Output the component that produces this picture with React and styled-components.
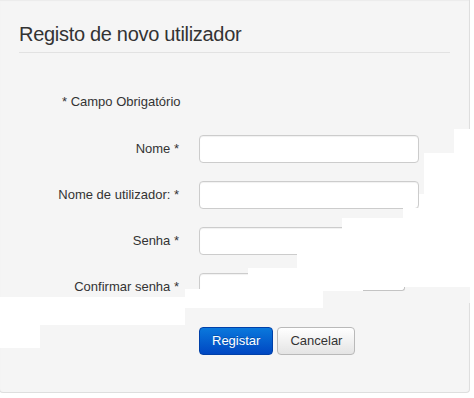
import React from 'react';
import styled, { createGlobalStyle } from 'styled-components';

const fields = [
  { id: 'name', label: 'Nome *', type: 'text' },
  { id: 'username', label: 'Nome de utilizador: *', type: 'text' },
  { id: 'password', label: 'Senha *', type: 'password' },
  { id: 'confirm', label: 'Confirmar senha *', type: 'password' },
];

// white patches that cover parts of the captured page
const patches = [
  { x: 454, y: 129, w: 16, h: 24 },
  { x: 424, y: 153, w: 46, h: 41 },
  { x: 419, y: 194, w: 51, h: 14 },
  { x: 403, y: 208, w: 67, h: 10 },
  { x: 342, y: 218, w: 128, h: 11 },
  { x: 297, y: 229, w: 173, h: 39 },
  { x: 248, y: 268, w: 222, h: 19 },
  { x: 248, y: 287, w: 115, h: 5 },
  { x: 404, y: 287, w: 66, h: 16, tone: 'panel' },
  { x: 323, y: 291, w: 81, h: 12, tone: 'panel' },
  { x: 185, y: 289, w: 138, h: 19 },
  { x: 0, y: 297, w: 185, h: 28 },
  { x: 0, y: 297, w: 40, h: 51 },
];

function App() {
  return (
    <Page>
      <GlobalStyle />
      <Well>
        <Legend>Registo de novo utilizador</Legend>

        <Form onSubmit={(e) => e.preventDefault()}>
          <Required>* Campo Obrigatório</Required>

          {fields.map((f) => (
            <Row key={f.id}>
              <Label htmlFor={f.id}>{f.label}</Label>
              <Input id={f.id} type={f.type} />
            </Row>
          ))}

          <Actions>
            <Button type="submit" $primary>Registar</Button>
            <Button type="button">Cancelar</Button>
          </Actions>
        </Form>
      </Well>

      {patches.map((p, i) => (
        <Patch key={i} $x={p.x} $y={p.y} $w={p.w} $h={p.h} $tone={p.tone} />
      ))}
      <Fragment />
    </Page>
  );
}

export default App;

const GlobalStyle = createGlobalStyle`
  html, body {
    margin: 0;
    padding: 0;
    background: #fff;
  }
  body {
    font-family: "Liberation Sans", Arial, sans-serif;
    color: #333;
  }
`;

const Page = styled.div`
  position: relative;
  width: 474px;
  height: 398px;
  overflow: hidden;
`;

const Well = styled.section`
  box-sizing: border-box;
  width: 471px;
  margin-left: -1px;
  padding: 19px 19px 37px 19px;
  background-color: #f5f5f5;
  border: 1px solid #dedede;
  border-top: none;
  border-radius: 0 0 4px 4px;
  box-shadow: inset 0 1px 1px rgba(0, 0, 0, 0.04);
`;

const Legend = styled.h2`
  margin: 0;
  padding-bottom: 3px;
  font-size: 20px;
  line-height: 30px;
  font-weight: 400;
  letter-spacing: -0.3px;
  color: #333;
  border-bottom: 1px solid #e2e2e2;
`;

const Form = styled.form`
  display: flex;
  flex-direction: column;
  gap: 18px;
  margin-top: 40px;
`;

const Required = styled.p`
  margin: 0 0 6px 43px;
  font-size: 13px;
  line-height: 18px;
  color: #333;
`;

const Row = styled.div`
  display: grid;
  grid-template-columns: 160px 220px;
  column-gap: 20px;
  align-items: center;
`;

const Label = styled.label`
  text-align: right;
  font-size: 13px;
  line-height: 28px;
  color: #333;
`;

const Input = styled.input`
  box-sizing: border-box;
  width: 220px;
  height: 28px;
  margin: 0;
  padding: 4px 6px;
  font-family: inherit;
  font-size: 13px;
  background: #fff;
  border: 1px solid #ccc;
  border-radius: 4px;
  box-shadow: inset 0 1px 1px rgba(0, 0, 0, 0.06);
  outline: none;
`;

const Actions = styled.div`
  display: flex;
  gap: 4px;
  margin: 8px 0 0 180px;
`;

const Button = styled.button`
  box-sizing: border-box;
  height: 28px;
  padding: 0 12px;
  font-family: inherit;
  font-size: 13px;
  line-height: 26px;
  border-radius: 4px;
  cursor: pointer;
  color: ${(p) => (p.$primary ? '#fff' : '#333')};
  background: ${(p) => (p.$primary
    ? 'linear-gradient(#0a78dc, #0047c2)'
    : 'linear-gradient(#ffffff, #e4e4e4)')};
  border: 1px solid ${(p) => (p.$primary ? '#0040a8' : '#b9b9b9')};
  text-shadow: ${(p) => (p.$primary ? '0 -1px 0 rgba(0,0,0,0.2)' : 'none')};
`;

const Patch = styled.div`
  position: absolute;
  left: ${(p) => p.$x}px;
  top: ${(p) => p.$y}px;
  width: ${(p) => p.$w}px;
  height: ${(p) => p.$h}px;
  background: ${(p) => (p.$tone === 'panel' ? '#f5f5f5' : '#fff')};
`;

const Fragment = styled.div`
  position: absolute;
  left: 363px;
  top: 287px;
  width: 41px;
  height: 3px;
  background: #fff;
  border-bottom: 1px solid #c4c4c4;
  border-right: 1px solid #c4c4c4;
  border-bottom-right-radius: 3px;
`;
